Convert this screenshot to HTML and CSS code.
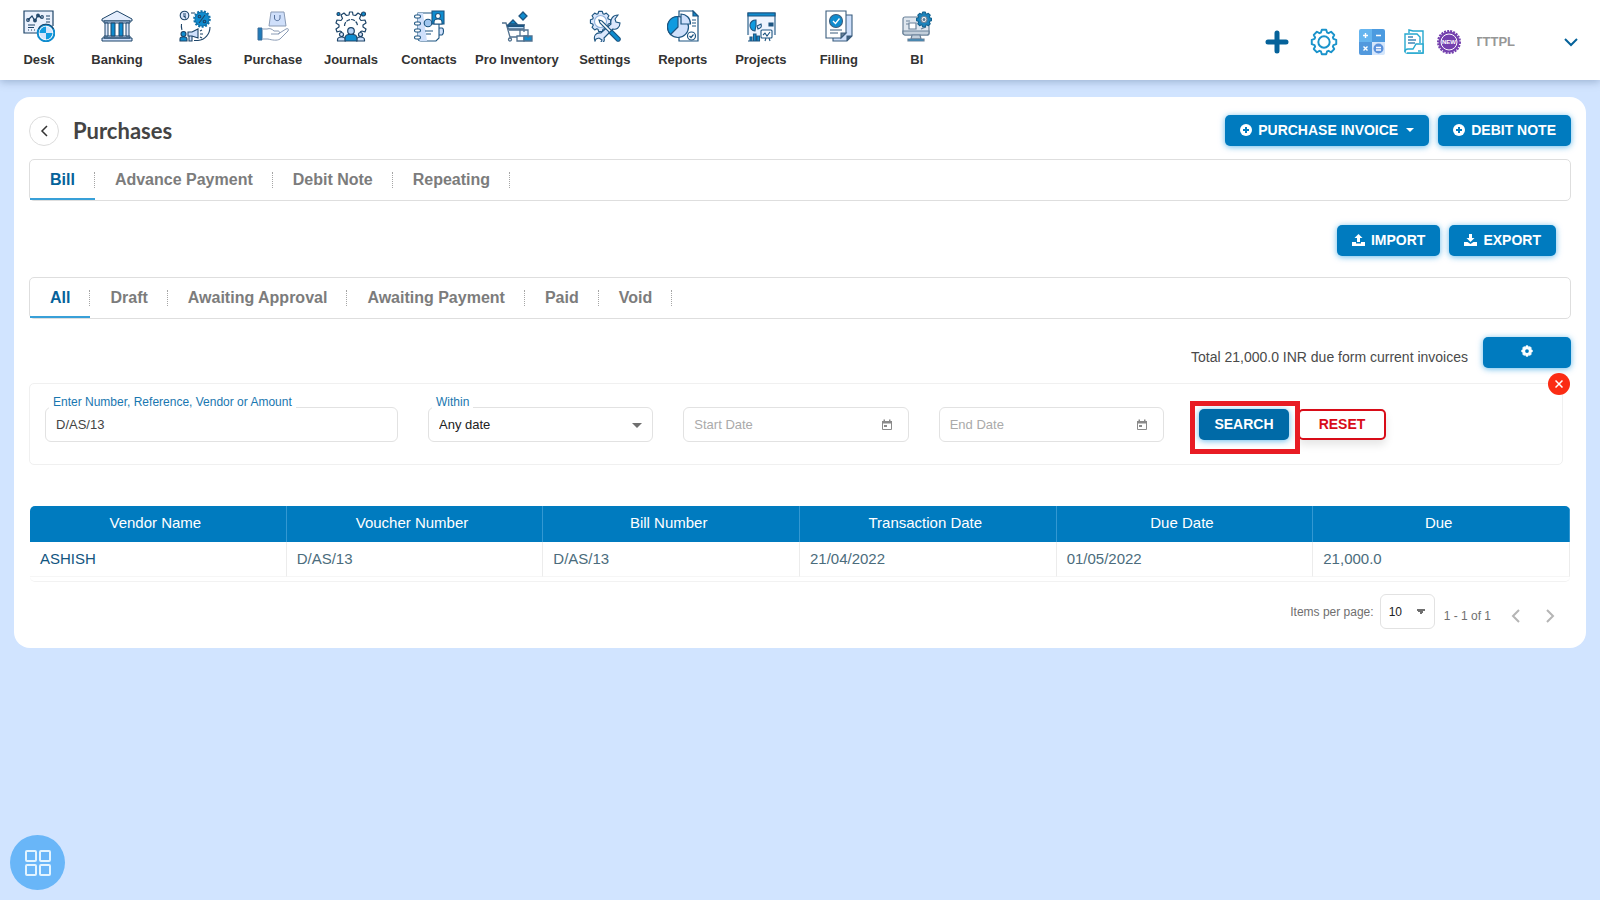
FILE: index.html
```html
<!DOCTYPE html>
<html lang="en">
<head>
<meta charset="utf-8">
<meta name="viewport" content="width=device-width, initial-scale=1">
<title>Purchases</title>
<link rel="stylesheet" href="styles.css">
</head>
<body>
<svg class="defs" aria-hidden="true">
  <symbol id="gear" viewBox="0 0 32 32"><path stroke-linejoin="round" d="M13.5 2h5l1 3.2 1.7.7 2.9-1.6 3.6 3.6-1.6 2.9.7 1.7 3.2 1v5l-3.2 1-.7 1.7 1.6 2.9-3.6 3.6-2.9-1.6-1.7.7-1 3.2h-5l-1-3.2-1.7-.7-2.9 1.6-3.6-3.6 1.6-2.9-.7-1.7-3.2-1v-5l3.2-1 .7-1.7-1.6-2.9 3.6-3.6 2.9 1.6 1.7-.7z"/></symbol>
  <symbol id="plus-circle" viewBox="0 0 12 12"><circle cx="6" cy="6" r="6" fill="#fff"/><path d="M6 3v6M3 6h6" stroke="#007bbf" stroke-width="2"/></symbol>
  <symbol id="calendar" viewBox="0 0 12 12"><path d="M1.5 2.5h9v8h-9z" fill="none" stroke="#8a8a8a"/><path d="M1 2h10v2.500H1zM2.500.5h1.500V2H2.500zM8 .5h1.500V2H8zM3 6h3v2H3z" fill="#8a8a8a"/></symbol>
</svg>

<header class="topbar">
  <nav class="modules" aria-label="Modules">
    <a class="module" href="#desk">
      <svg viewBox="0 0 32 32" fill="none" stroke="#1d4468" stroke-width="1.2"><path d="M14 23H1V1h29v15" fill="#eaf1fd"/><path d="M5 10l4-4 3 5 3-6 3 3"/><circle cx="5" cy="10" r="1.300"/><circle cx="12" cy="10.500" r="1.300"/><circle cx="15" cy="5.500" r="1.300"/><circle cx="19" cy="7" r="1.300"/><path d="M23 6h4M23 9h4M23 12h4M5 15h7M5 17.500h6M5 20h1M8 20h1M11 20h1"/><circle cx="23" cy="23" r="8.300" fill="#fff" stroke="#0f8ccf" stroke-width="2"/><path d="M23 23v-6.500a6.500 6.500 0 0 1 6.500 6.500zM23 23v6.500a6.500 6.500 0 0 1-6.500-6.500z" fill="#d5e4fb" stroke="none"/><path d="M23 23h-6.500a6.500 6.500 0 0 1 6.500-6.500zM23 23h6.500a6.500 6.500 0 0 1-6.500 6.500z" fill="#0f9be0" stroke="none"/><path d="M15.500 19a8.300 8.300 0 0 1 15 0"/></svg>
      <span>Desk</span></a>
    <a class="module" href="#banking">
      <svg viewBox="0 0 32 32" stroke="#1d4468" stroke-width="1"><path d="M1 9L16 1l15 8v2H1z" fill="#e4edfc"/><path d="M3 11h26v2H3zM3 26h26v2H3zM1 28h30v3H1z" fill="#cfe0fb"/><path d="M4 13h3v13H4zM25 13h3v13h-3z" fill="#dbe7fc"/><path d="M10 13h4v13h-4zM18 13h4v13h-4z" fill="#0f8ccf"/></svg>
      <span>Banking</span></a>
    <a class="module" href="#sales">
      <svg viewBox="0 0 32 32" fill="none" stroke="#1d4468" stroke-width="1.100"><circle cx="5.500" cy="5.500" r="4.300" fill="#dbe7fc"/><path d="M4 4h3M4 6h3M5 6l2 2.500M12 3h4M2.500 14c-.5 3 0 4 .5 6M31 17c0 7-5 13-12 13.500h-4"/><circle cx="23" cy="9" r="7" fill="#0f8ccf" stroke="#0d70aa"/><circle cx="23" cy="9" r="7.800" stroke="#0d70aa" stroke-width="2" stroke-dasharray="2 1.500"/><path d="M26 5l-6 8"/><circle cx="20.500" cy="6.500" r="1.300"/><circle cx="25.500" cy="11.500" r="1.300"/><circle cx="4.500" cy="24" r="2.500" fill="#0f8ccf"/><path d="M1 31v-2c0-3 7-3 7 0v2z" fill="#0f8ccf"/><path d="M9 22h4l6-3v9l-6-2H9zM10 26v5h3v-4.500" fill="#cfe0fb"/><path d="M21 21l2-1M21 24h3M21 27l2 1"/></svg>
      <span>Sales</span></a>
    <a class="module" href="#purchase">
      <svg viewBox="0 0 32 32" fill="none" stroke="#8a9bb5" stroke-width="1"><path d="M14 2h13l2 14H12z" fill="#cfdffa"/><path d="M17.500 5v3c0 3.500 5.500 3.500 5.500 0V5" stroke="#54709b"/><path d="M6 19h4c3-1 5 0 7 2h4c2 0 2 3 0 3h-7M21 24l8-5c2-1 3 0 2 2l-8 8c-3 2-8 1-12 0H6" fill="#fff"/><path d="M1 18h4v12H1z" fill="#217bb8" stroke="#386a98"/></svg>
      <span>Purchase</span></a>
    <a class="module" href="#journals">
      <svg viewBox="0 0 32 32" fill="none" stroke="#1d4468" stroke-width="1.200" stroke-linejoin="round"><path d="M7 22l-2-1-3 1-1-3 3-2v-2l-3-2 1-3 4 .5 1.500-2L6 5l3-2 2.500 2.500L14 5l.5-3h3l.5 3 2.500.5L23 3l3 2-1.500 3.500 1.500 2 4-.5 1 3-3 2v2l3 2-1 3-3-1-2 1"/><circle cx="3.500" cy="4" r="1.500" fill="#0f8ccf"/><circle cx="28.500" cy="4" r="2" fill="#0f8ccf"/><path d="M9.500 16a6.500 6.500 0 0 1 13 0" stroke-dasharray="4 1"/><circle cx="6.500" cy="24.500" r="2" fill="#dbe7fc"/><path d="M2.500 31v-1c0-4 8-4 8 0v1z" fill="#cfe0fb"/><circle cx="25.500" cy="24.500" r="2" fill="#dbe7fc"/><path d="M21.500 31v-1c0-4 8-4 8 0v1z" fill="#cfe0fb"/><path d="M10 31v-3c0-5 12-5 12 0v3z" fill="#0f8ccf"/><circle cx="16" cy="21" r="3.300" fill="#b9d4f6"/></svg>
      <span>Journals</span></a>
    <a class="module" href="#contacts">
      <svg viewBox="0 0 32 32" fill="none" stroke="#1d5581" stroke-width="1.100"><path d="M26 18h3c2 0 2 6 0 7h-3" fill="#cfe0fb"/><path d="M5 3h21v25l-3 3H8c-2 0-3-1-3-3z" fill="#fff"/><path d="M5 3h5l4 28H7l-2-2z" fill="#cfe0fb" stroke="none"/><circle cx="15" cy="13" r="3.800" fill="#9fc6ef"/><path d="M19 1h12v13H19z" fill="#0f8ccf"/><circle cx="25" cy="6" r="2.500" fill="#fff"/><path d="M21 14v-2c0-4 8-4 8 0v2z" fill="#fff"/><path d="M12 21h8M13 24h5"/><g fill="#fff"><rect x="1.500" y="5" width="6" height="3" rx="1.500"/><rect x="1.500" y="12" width="6" height="3" rx="1.500"/><rect x="1.500" y="19" width="6" height="3" rx="1.500"/><rect x="1.500" y="26" width="6" height="3" rx="1.500"/></g></svg>
      <span>Contacts</span></a>
    <a class="module" href="#inventory">
      <svg viewBox="0 0 32 32" fill="none" stroke="#50708e" stroke-width="1.300"><path d="M1 13h4l4 14h9M7 15h17M8 20h12"/><path d="M6 15h17v4H7.500z" fill="#bcd9f3"/><path d="M6 15h17v2H6.500z" fill="#1d5581" stroke="none"/><path d="M8 14l4-4 4 4z" fill="#0f8ccf" stroke="#1d5581"/><path d="M22 2l4 4-4 4-4-4z" fill="#0f8ccf" stroke="#1d5581"/><circle cx="9" cy="29.500" r="1.500"/><path d="M19 20h8v6h-8zM16 26h7v5h-7z" fill="#fff"/><path d="M23 26h8v5h-8z" fill="#0f8ccf"/><path d="M23 20v2M27 26v2"/></svg>
      <span>Pro Inventory</span></a>
    <a class="module" href="#settings">
      <svg viewBox="0 0 32 32" fill="none" stroke="#1d5581" stroke-width="1.100"><use href="#gear" x="0" y="0" width="23" height="23" fill="#dbe7fc" stroke-width="1.600"/><circle cx="11.500" cy="11.500" r="6" fill="#fff" stroke="#8fb2dc"/><path d="M6 31c-2-5 1-9 6-8l10-9c-1-5 2-9 7-9l-3 4 1 3 4 1c0 5-4 7-7 6l-9 9c1 3-1 5-4 6l2-4-3-2-3 1z" fill="#dbe7fc"/><path d="M10 10l3 1 10 10-2 2-10-10z" fill="#fff"/><path d="M20 23l3-3 8 8c1 2-1 4-3 3z" fill="#0f8ccf"/></svg>
      <span>Settings</span></a>
    <a class="module" href="#reports">
      <svg viewBox="0 0 32 32" fill="none" stroke="#1d5581" stroke-width="1.200"><path d="M12 1h14l5 5v25H12z" fill="#fff"/><path d="M26 1v5h5z" fill="#0f8ccf"/><path d="M25 10h4M25 13h4M25 16h4"/><circle cx="11" cy="17" r="10.500" fill="#cfe0fb"/><path d="M11 17l-7.500 7.500C-2 18 0 7 11 6.500z" fill="#0f9be0"/><path d="M14 14V4c5 0 9.500 4 9.500 10z" fill="#cfe0fb"/><circle cx="24.500" cy="26" r="4" fill="#fff"/><path d="M22.500 26l1.500 1.500 2.500-3"/></svg>
      <span>Reports</span></a>
    <a class="module" href="#projects">
      <svg viewBox="0 0 32 32" fill="none" stroke="#1d5581" stroke-width="1.100"><path d="M3 25V3h27v22" fill="#eef4fe"/><path d="M3 3h27v3H3z" fill="#0f8ccf"/><path d="M10 21a5.500 5.500 0 0 1 1-11v5z" fill="#0f9be0"/><path d="M12 16l4-2c1 3 0 4-3 5z" fill="#cfe0fb"/><path d="M24 13h4v3h-4z" fill="#1d5581"/><path d="M5 31v-4h2v4M8.500 31v-7H11v7M12 31v-5h2.500v5M3 31h12" fill="#0f8ccf"/><rect x="16" y="20" width="11" height="8" rx="1" fill="#fff"/><path d="M18 25l2-2 2 3 3-4M20 31l1-3M25 31l-1-3"/></svg>
      <span>Projects</span></a>
    <a class="module" href="#filling">
      <svg viewBox="0 0 32 32" fill="none" stroke="#3a5d7e" stroke-width="1.100"><path d="M10 5h19v21l-5 5H10z" fill="#cfe0fb"/><path d="M24 31v-5h5" fill="#3a5d7e"/><path d="M3 1h20v22l-5 5H3z" fill="#fff"/><path d="M18 28v-5h5z" fill="#6b8299"/><circle cx="13" cy="11" r="6.500" fill="#0f8ccf"/><path d="M10 11l2.500 2.500 4-5" stroke="#fff" stroke-width="1.300"/><path d="M7 20h12M7 23h8"/></svg>
      <span>Filling</span></a>
    <a class="module" href="#bi">
      <svg viewBox="0 0 32 32" fill="none" stroke="#6b8299" stroke-width="1.200"><rect x="2" y="7" width="26" height="18" rx="2" fill="#dfe6ee"/><path d="M2 21h26v2c0 1-1 2-2 2H4c-1 0-2-1-2-2z" fill="#c3cfdb"/><path d="M11 25h8l1 4h-10z" fill="#c3cfdb"/><path d="M7 29h16v2H7z" fill="#2b8cc4"/><path d="M5 11h4M5 14h3M8 13h7v6H8zM20 19l5-2" fill="#fff"/><use href="#gear" x="14.500" y="1" width="17" height="17" fill="#1c83bb" stroke="#125f8c" stroke-width="2"/><circle cx="23" cy="9.500" r="3" fill="#fff"/><circle cx="23" cy="9.500" r="1" fill="#125f8c"/></svg>
      <span>BI</span></a>
  </nav>
  <div class="tools">
    <button class="icon-button" type="button" aria-label="Add"><svg width="24" height="24" viewBox="0 0 24 24"><path d="M12 3v18M3 12h18" stroke="#05629a" stroke-width="5" stroke-linecap="round"/></svg></button>
    <button class="icon-button tool-gear" type="button" aria-label="Settings"><svg width="28" height="28" viewBox="0 0 32 32" fill="none" stroke="#1a93cb" stroke-width="2.200"><use href="#gear" width="32" height="32"/><circle cx="16" cy="16" r="6.500"/></svg></button>
    <button class="icon-button tool-calc" type="button" aria-label="Calculator"><svg width="26" height="26" viewBox="0 0 26 26"><path d="M2 0h11v13H0V2q0-2 2-2z" fill="#66b5ef"/><path d="M13 0h11q2 0 2 2v11H13z" fill="#4c9be0"/><path d="M0 13h13v13H2q-2 0-2-2z" fill="#5299dd"/><path d="M13 13h13v11q0 2-2 2H13z" fill="#d4e6fb"/><circle cx="19.500" cy="19.500" r="5" fill="#5b92dc"/><path d="M6.500 4v5M4 6.500h5M17 6.500h5M4.500 17.500l4 4M8.500 17.500l-4 4M17 18.500h5M17 21h5" stroke="#fff" stroke-width="1.400"/></svg></button>
    <button class="icon-button" type="button" aria-label="Documents"><svg width="20" height="26" viewBox="0 0 20 26" fill="none" stroke="#25a8cf" stroke-width="1.400"><path d="M5 4V1l4 1h10v22H3q-2 0-2-2V5h12l3 3v6"/><path d="M1 23q0-3 3-3h5l3-5h7v9H3" fill="#fff"/><path d="M4 8h5M4 11h8M4 14h7" stroke="#3f87b8"/><path d="M14 22h3"/></svg></button>
    <button class="icon-button tool-new" type="button" aria-label="What is new"><svg width="24" height="24" viewBox="0 0 24 24"><circle cx="12" cy="12" r="10.500" fill="#7440ae"/><circle cx="12" cy="12" r="11" fill="none" stroke="#7440ae" stroke-width="2" stroke-dasharray="2 1.100"/><circle cx="12" cy="12" r="8" fill="none" stroke="#fff"/><text class="new-text" x="12" y="14" text-anchor="middle" fill="#fff">NEW</text></svg></button>
    <span class="company"><span>TTTPL</span></span>
    <button class="icon-button" type="button" aria-label="Company menu"><svg width="14" height="10" viewBox="0 0 14 10"><path d="M1 2l6 6 6-6" fill="none" stroke="#05629a" stroke-width="2"/></svg></button>
  </div>
</header>

<main class="card">
  <div class="title-row">
    <button class="back" type="button" aria-label="Back"><svg width="8" height="12" viewBox="0 0 8 12"><path d="M7 1L2 6l5 5" fill="none" stroke="#333" stroke-width="1.500"/></svg></button>
    <h1 class="title">Purchases</h1>
    <div class="actions">
      <button class="btn" type="button"><svg width="12" height="12"><use href="#plus-circle"/></svg>PURCHASE INVOICE<span class="caret"></span></button>
      <button class="btn" type="button"><svg width="12" height="12"><use href="#plus-circle"/></svg>DEBIT NOTE</button>
    </div>
  </div>

  <nav class="tabs" aria-label="Document type">
    <a class="tab active" href="#bill">Bill</a>
    <a class="tab" href="#advance">Advance Payment</a>
    <a class="tab" href="#debit">Debit Note</a>
    <a class="tab" href="#repeating">Repeating</a>
  </nav>

  <div class="transfer">
    <button class="btn" type="button"><svg width="13" height="12" viewBox="0 0 13 12" fill="#fff"><path d="M6.500 0l4 4H8v4H5V4H2.500zM0 8h4v1.500h5V8h4v4H0z"/></svg>IMPORT</button>
    <button class="btn" type="button"><svg width="13" height="12" viewBox="0 0 13 12" fill="#fff"><path d="M5 0h3v4h2.500l-4 4-4-4H5zM0 8h3.500l3 2 3-2H13v4H0z"/></svg>EXPORT</button>
  </div>

  <nav class="tabs" aria-label="Bill status">
    <a class="tab active" href="#all">All</a>
    <a class="tab" href="#draft">Draft</a>
    <a class="tab" href="#approval">Awaiting Approval</a>
    <a class="tab" href="#payment">Awaiting Payment</a>
    <a class="tab" href="#paid">Paid</a>
    <a class="tab" href="#void">Void</a>
  </nav>

  <div class="summary">
    <span class="total">Total 21,000.0 INR due form current invoices</span>
    <button class="btn options" type="button" aria-label="Options"><svg width="12" height="12" viewBox="0 0 32 32"><use href="#gear" width="32" height="32" fill="#fff" stroke="#fff" stroke-width="2"/><circle cx="16" cy="16" r="5" fill="#007bbf"/></svg></button>
  </div>

  <form class="filter">
    <button class="close" type="button" aria-label="Close filter"><svg width="8" height="8" viewBox="0 0 8 8"><path d="M.5.5l7 7M7.500.5l-7 7" stroke="#fff" stroke-width="1.500"/></svg></button>
    <div class="field">
      <input class="control" id="query" type="text" value="D/AS/13">
      <label class="float-label" for="query">Enter Number, Reference, Vendor or Amount</label>
    </div>
    <div class="field">
      <select class="control" id="within"><option>Any date</option></select>
      <label class="float-label" for="within">Within</label>
    </div>
    <div class="field">
      <input class="control" type="text" placeholder="Start Date" aria-label="Start Date">
      <button class="pick" type="button" aria-label="Choose start date"><svg width="12" height="12"><use href="#calendar"/></svg></button>
    </div>
    <div class="field">
      <input class="control" type="text" placeholder="End Date" aria-label="End Date">
      <button class="pick" type="button" aria-label="Choose end date"><svg width="12" height="12"><use href="#calendar"/></svg></button>
    </div>
    <div class="buttons">
      <div class="search-wrap"><button class="btn search" type="button">SEARCH</button><span class="highlight"></span></div>
      <button class="btn reset" type="reset">RESET</button>
    </div>
  </form>

  <div class="table-box">
    <table class="bills">
      <thead><tr><th>Vendor Name</th><th>Voucher Number</th><th>Bill Number</th><th>Transaction Date</th><th>Due Date</th><th>Due</th></tr></thead>
      <tbody><tr><td><a href="#ashish">ASHISH</a></td><td>D/AS/13</td><td>D/AS/13</td><td>21/04/2022</td><td>01/05/2022</td><td>21,000.0</td></tr></tbody>
    </table>
  </div>

  <div class="pager">
    <label for="size">Items per page:</label>
    <select class="control page-size" id="size"><option>10</option></select>
    <div class="pager-nav">
      <span>1 - 1 of 1</span>
      <button class="icon-button" type="button" aria-label="Previous page"><svg width="10" height="14" viewBox="0 0 10 14"><path d="M8 1L2 7l6 6" fill="none" stroke="#b5b5b5" stroke-width="2"/></svg></button>
      <button class="icon-button" type="button" aria-label="Next page"><svg width="10" height="14" viewBox="0 0 10 14"><path d="M2 1l6 6-6 6" fill="none" stroke="#b5b5b5" stroke-width="2"/></svg></button>
    </div>
  </div>
</main>

<button class="fab" type="button" aria-label="Apps"><svg width="26" height="26" viewBox="0 0 26 26" fill="none" stroke="#e2f4ff" stroke-width="2"><rect x="1" y="1" width="10" height="10" rx="1"/><rect x="15" y="1" width="10" height="10" rx="1"/><rect x="1" y="15" width="10" height="10" rx="1"/><rect x="15" y="15" width="10" height="10" rx="1"/></svg></button>
</body>
</html>
```
FILE: styles.css
```css
* { box-sizing: border-box; }
body {
  margin: 0;
  min-height: 100vh;
  background: #d1e4ff;
  color: #4a4a4a;
  font-family: "Liberation Sans", Arial, sans-serif;
  font-size: 14px;
}
button, input, select { font-family: inherit; }
button { cursor: pointer; }
a { text-decoration: none; color: inherit; }
svg { display: block; flex: none; }
.defs { position: absolute; width: 0; height: 0; }

.topbar {
  display: flex;
  justify-content: space-between;
  background: #fff;
  box-shadow: 0 2px 8px rgba(60, 90, 130, .35);
}
.modules { display: flex; }
.module {
  display: flex;
  flex-direction: column;
  align-items: center;
  gap: 8px;
  min-width: 78px;
  padding: 10px 7px;
  color: #333;
  font-size: 13px;
  font-weight: bold;
  line-height: 20px;
  white-space: nowrap;
}
.module svg { width: 32px; height: 32px; }
.tools {
  display: flex;
  align-items: center;
  gap: 16px;
  padding: 3px 22px 0 0;
}
.icon-button { padding: 0; border: 0; background: none; }
.tool-gear { margin: 0 5px; }
.tool-calc { margin-right: 3px; }
.tool-new { margin-left: -3px; }
.new-text { font-size: 6px; font-weight: bold; }
.company {
  display: flex;
  justify-content: flex-end;
  overflow: hidden;
  width: 38px;
  margin-right: 33px;
  color: #979797;
  font-size: 13px;
  font-weight: bold;
}

.card {
  margin: 17px 14px;
  padding: 18px 15px 19px;
  border-radius: 16px;
  background: #fff;
}
.title-row { display: flex; align-items: center; }
.back {
  display: grid;
  place-items: center;
  width: 30px;
  height: 30px;
  padding: 0;
  border: 1px solid #dcdcdc;
  border-radius: 50%;
  background: #fff;
}
.title {
  margin: 0 auto 0 14px;
  color: #444;
  font-family: "Chalkboard SE", "Comic Sans MS", Lato, sans-serif;
  font-size: 22px;
  line-height: 28px;
}
.actions { display: flex; gap: 9px; }
.btn {
  display: flex;
  align-items: center;
  justify-content: center;
  gap: 6px;
  height: 31px;
  padding: 0 15px 1px;
  border: 0;
  border-radius: 5px;
  background: #007bbf;
  box-shadow: 0 1px 6px rgba(0, 140, 220, .6);
  color: #fff;
  font-size: 14px;
  font-weight: bold;
}
.caret {
  margin-left: 2px;
  border: 4px solid transparent;
  border-top-color: #fff;
  border-bottom: 0;
}

.tabs {
  display: flex;
  margin-top: 13px;
  border: 1px solid #dedede;
  border-radius: 5px;
}
.tab {
  display: flex;
  align-items: center;
  height: 40px;
  color: #7c7c7c;
  font-size: 16px;
  font-weight: bold;
}
.tab::before { content: ""; width: 20px; }
.tab::after {
  content: "";
  height: 16px;
  margin-left: 19px;
  border-right: 1px dotted #a5a5a5;
}
.tab.active { color: #05629a; box-shadow: inset 0 -2px #38a0d8; }
.transfer {
  display: flex;
  justify-content: flex-end;
  gap: 9px;
  margin-top: 24px;
  padding-right: 15px;
}
.transfer + .tabs { margin-top: 21px; }

.summary {
  display: flex;
  justify-content: flex-end;
  gap: 15px;
  margin-top: 18px;
}
.total { padding-top: 12px; line-height: 16px; }
.options { width: 88px; padding-bottom: 3px; }

.filter {
  position: relative;
  display: grid;
  grid-template-columns: 3fr 2fr 2fr 2fr 3fr;
  margin: 15px 8px 0 0;
  padding: 23px 0 22px;
  border: 1px solid #f0f0f0;
  border-radius: 5px;
}
.close {
  position: absolute;
  top: -11px;
  right: -8px;
  display: grid;
  place-items: center;
  width: 22px;
  height: 22px;
  padding: 0;
  border: 0;
  border-radius: 50%;
  background: #fb2c14;
}
.field { position: relative; padding: 0 15px; }
.control {
  width: 100%;
  height: 35px;
  padding: 0 10px 1px;
  border: 1px solid #e2e2e2;
  border-radius: 6px;
  background-color: #fff;
  color: #444;
  font-size: 13px;
}
.control::placeholder { color: #aaa; opacity: 1; }
select.control {
  appearance: none;
  color: #222;
}
.field:has(select)::after {
  content: "";
  position: absolute;
  top: 16px;
  right: 26px;
  border: 5px solid transparent;
  border-top-color: #6f6f6f;
  border-bottom: 0;
  pointer-events: none;
}
.float-label {
  position: absolute;
  top: -13px;
  left: 19px;
  padding: 0 4px;
  background: #fff;
  color: #1977b0;
  font-size: 12px;
  line-height: 16px;
}
.pick {
  position: absolute;
  top: 12px;
  right: 31px;
  padding: 0;
  border: 0;
  background: none;
}
.buttons {
  display: flex;
  align-items: flex-start;
  gap: 9px;
  padding: 2px 0 0 20px;
}
.search-wrap { position: relative; }
.search { width: 90px; background: #006aa7; }
.highlight {
  position: absolute;
  inset: -8px -11px -14px -9px;
  border: 5px solid #e81c24;
  pointer-events: none;
}
.reset {
  width: 88px;
  border: 2px solid #d80c18;
  background: #fff;
  box-shadow: 0 5px 8px rgba(0, 0, 0, .1);
  color: #d80c18;
}

.table-box {
  overflow: hidden;
  margin: 41px 1px 0;
  padding-bottom: 4px;
  border-bottom: 1px solid #f2f2f2;
  border-radius: 5px;
}
.bills {
  width: 100%;
  table-layout: fixed;
  border-spacing: 0;
  font-size: 15px;
}
.bills th {
  height: 36px;
  padding: 0 5px 3px 0;
  border-right: 1px solid #3398d2;
  background: #007bbf;
  color: #fff;
  font-weight: normal;
}
.bills td {
  height: 35px;
  padding: 0 10px 2px;
  border-right: 1px solid #ececec;
  border-bottom: 1px solid #f6f6f6;
  color: #4b6c7c;
}
.bills td a { color: #12557f; }

.pager {
  display: flex;
  align-items: center;
  justify-content: flex-end;
  gap: 6px;
  margin-top: 12px;
  padding-right: 16px;
  color: #6f6f6f;
  font-size: 12px;
}
.page-size {
  width: 55px;
  padding: 0 8px;
  background-image: linear-gradient(to top right, transparent 50%, #6f6f6f 50%), linear-gradient(to top left, transparent 50%, #6f6f6f 50%);
  background-position: right 13px center, right 8px center;
  background-repeat: no-repeat;
  background-size: 5px 5px;
  font-size: 12px;
}
.pager-nav {
  display: flex;
  align-items: center;
  gap: 24px;
  padding: 8px 0 0 3px;
}
.pager-nav span { margin-right: -4px; }

.fab {
  position: fixed;
  bottom: 10px;
  left: 10px;
  display: grid;
  place-items: center;
  width: 55px;
  height: 55px;
  padding: 0;
  border: 0;
  border-radius: 50%;
  background: #69b6f8;
}
```
